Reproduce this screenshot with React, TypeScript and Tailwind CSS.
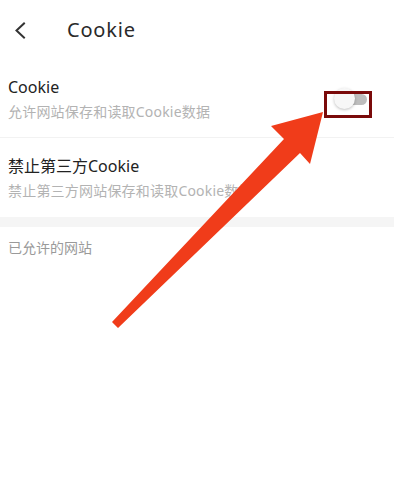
import React from 'react';

const font = { fontFamily: '"Noto Sans", "Noto Sans CJK SC", sans-serif' };

function Toggle() {
  return (
    <div className="relative w-[34px] h-[22px]">
      {/* track */}
      <div className="absolute left-[10px] top-[6px] w-[23px] h-[11px] rounded-r-full bg-[#bdbdbd]" />
      {/* knob */}
      <div className="absolute left-0 top-0 w-[21px] h-[21px] rounded-full bg-[#f7f7f7] shadow-[0_1px_3px_rgba(0,0,0,0.25)]" />
    </div>
  );
}

function SettingRow({ title, desc, right, className }: { title: string; desc: string; right?: React.ReactNode; className: string }) {
  return (
    <div className={`flex items-center justify-between pl-2 pr-[26px] ${className}`}>
      <div className="flex flex-col gap-[4px]">
        <p className="text-[16px] leading-[22px] text-[#222222]">{title}</p>
        <p className="text-[14px] leading-[20px] tracking-[0.2px] text-[#b3b3b3]">{desc}</p>
      </div>
      {right}
    </div>
  );
}

export default function App() {
  return (
    <div className="relative w-[394px] h-[500px] bg-white overflow-hidden" style={font}>
      {/* Header */}
      <header className="flex items-center h-[60px]">
        <div className="w-[67px] flex justify-start pl-[14px]">
          <svg width="12" height="17" viewBox="0 0 12 17" fill="none">
            <path d="M10 1.5 L2.5 8.5 L10 15.5" stroke="#333333" strokeWidth="2" strokeLinecap="square" />
          </svg>
        </div>
        <h1 className="text-[20px] leading-[28px] tracking-[0.8px] text-[#2a2a2a]">Cookie</h1>
      </header>

      {/* Settings */}
      <SettingRow
        title="Cookie"
        desc="允许网站保存和读取Cookie数据"
        right={<Toggle />}
        className="h-[78px] border-b border-[#f2f2f2]"
      />
      <SettingRow
        title="禁止第三方Cookie"
        desc="禁止第三方网站保存和读取Cookie数据"
        className="h-[79px]"
      />

      <div className="h-[10px] bg-[#f5f5f5]" />

      <div className="pl-2 pt-[11px]">
        <p className="text-[14px] leading-[20px] text-[#9a9a9a]">已允许的网站</p>
      </div>

      {/* Annotation box */}
      <div className="absolute left-[324px] top-[91px] w-[48px] h-[27px] border-[3px] border-[#7a0a0a]" />

      {/* Annotation arrow */}
      <svg className="absolute left-0 top-0 pointer-events-none" width="394" height="500" viewBox="0 0 394 500">
        <polygon
          points="112,322 284,139 271,126 323,112 310,164 300,153 118,328"
          fill="#f03c1a"
          strokeLinejoin="round"
        />
      </svg>
    </div>
  );
}
